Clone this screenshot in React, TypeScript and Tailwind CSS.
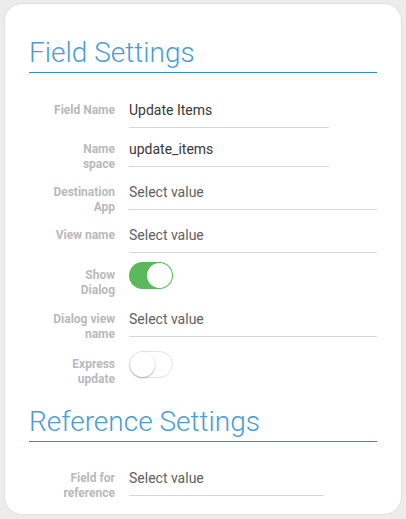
const font = { fontFamily: "Roboto, 'Liberation Sans', sans-serif" };

function SectionTitle({ children }: { children: string }) {
	return (
		<div className="h-[37px] border-b-[1.5px] border-[#2b8fc2]">
			<h2
				className="text-[28px] font-light leading-[34px] text-[#4a9dd3]"
				style={{ fontFamily: "'Roboto Light', Roboto, 'Liberation Sans', sans-serif" }}
			>
				{children}
			</h2>
		</div>
	);
}

function Label({ text, className = "" }: { text: string[]; className?: string }) {
	return (
		<div className={`w-[86px] shrink-0 text-right text-[12px] font-bold leading-[14.5px] text-[#b9b9bb] ${className}`}>
			{text.map((t) => (
				<div key={t}>{t}</div>
			))}
		</div>
	);
}

function InputRow({
	label,
	value,
	width,
	height,
	placeholder = false,
}: {
	label: string[];
	value: string;
	width: string;
	height: string;
	placeholder?: boolean;
}) {
	return (
		<div className={`flex items-start gap-[14px] ${height}`}>
			<Label text={label} className="mt-[8px]" />
			<div
				className={`flex h-[33px] items-center border-b border-[#d6d6d6] pb-[1px] text-[14px] ${width} ${
					placeholder ? "text-[#616161]" : "text-[#383838]"
				}`}
			>
				{value}
			</div>
		</div>
	);
}

function Toggle({ on }: { on: boolean }) {
	if (on) {
		return (
			<div className="flex h-[27px] w-[44px] items-center justify-end rounded-full bg-[#5cb85c] p-[1px]">
				<div className="h-[25px] w-[25px] rounded-full bg-white" />
			</div>
		);
	}
	return (
		<div className="flex h-[27px] w-[44px] items-center rounded-full border border-[#e2e2e2] bg-white">
			<div className="h-[25px] w-[25px] rounded-full bg-white shadow-[0_1px_2px_rgba(0,0,0,0.3)]" />
		</div>
	);
}

function ToggleRow({ label, on, height }: { label: string[]; on: boolean; height: string }) {
	return (
		<div className={`flex items-start gap-[14px] ${height}`}>
			<Label text={label} className="mt-[6px]" />
			<Toggle on={on} />
		</div>
	);
}

export default function App() {
	return (
		<div className="min-h-screen bg-[#ececec] px-[4px] pt-[3px] pb-[4px]" style={font}>
			<div className="rounded-[18px] border border-[#e0e0e0] bg-white px-[24px] pt-[32px]">
				<SectionTitle>Field Settings</SectionTitle>

				<div className="mt-[22px]">
					<InputRow height="h-[39px]" label={["Field Name"]} value="Update Items" width="w-[200px]" />
					<InputRow height="h-[43px]" label={["Name", "space"]} value="update_items" width="w-[200px]" />
					<InputRow
						height="h-[43px]"
						label={["Destination", "App"]}
						value="Select value"
						width="w-[248px]"
						placeholder
					/>
					<InputRow
						height="h-[42px]"
						label={["View name"]}
						value="Select value"
						width="w-[248px]"
						placeholder
					/>
					<ToggleRow height="h-[42px]" label={["Show", "Dialog"]} on />
					<InputRow
						height="h-[47px]"
						label={["Dialog view", "name"]}
						value="Select value"
						width="w-[248px]"
						placeholder
					/>
					<ToggleRow height="h-[54px]" label={["Express", "update"]} on={false} />
				</div>

				<SectionTitle>Reference Settings</SectionTitle>

				<div className="mt-[21px]">
					<InputRow
						height="h-[51px]"
						label={["Field for", "reference"]}
						value="Select value"
						width="w-[195px]"
						placeholder
					/>
				</div>
			</div>
		</div>
	);
}
